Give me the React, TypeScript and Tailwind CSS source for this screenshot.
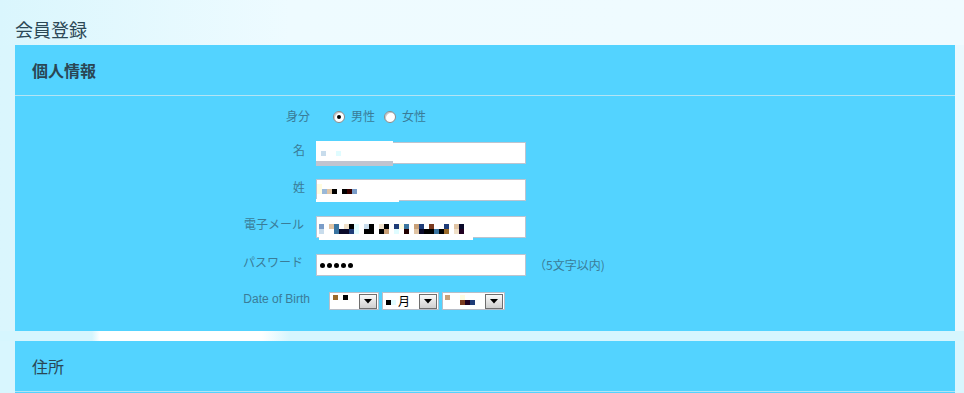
import React from "react";

const JP = "font-['Noto_Sans_CJK_JP','Noto_Sans',sans-serif]";

type Px = [number, number, string, number?, number?];

function Mosaic({ pixels, w, h }: { pixels: Px[]; w: number; h: number }) {
  return (
    <svg width={w} height={h} className="absolute left-0 top-0" shapeRendering="crispEdges">
      {pixels.map(([x, y, c, pw, ph], i) => (
        <rect key={i} x={x} y={y} width={pw ?? 5} height={ph ?? 5} fill={c} />
      ))}
    </svg>
  );
}

function Radio({ checked }: { checked?: boolean }) {
  return (
    <div className="flex h-[12px] w-[12px] items-center justify-center rounded-full border border-[#8a8a8a] bg-white shadow-[inset_1px_1px_0_#c8c8c8]">
      {checked && <div className="h-[4px] w-[4px] rounded-full bg-black" />}
    </div>
  );
}

function TextBox({ children }: { children?: React.ReactNode }) {
  return (
    <div className="relative h-[22px] w-[210px] border border-[#bcc4d0] bg-white">{children}</div>
  );
}

function SelectBox({ w, pixels, text }: { w: number; pixels: Px[]; text?: string }) {
  return (
    <div
      className="relative flex h-[18px] items-center border border-[#b8bec8] bg-white"
      style={{ width: w }}
    >
      <Mosaic pixels={pixels} w={w} h={18} />
      {text && (
        <span className={`absolute top-[0px] text-[12px] leading-[16px] text-black ${JP}`} style={{ left: 15 }}>
          {text}
        </span>
      )}
      <div className="ml-auto mr-[1px] flex h-[15px] w-[18px] items-center justify-center border border-[#6e6e6e] bg-gradient-to-b from-[#fafafa] to-[#cfcfcf]">
        <svg width="8" height="5" viewBox="0 0 8 5">
          <path d="M0 0h8L4 4.5z" fill="#000" />
        </svg>
      </div>
    </div>
  );
}

const labelCls = `text-right text-[12px] leading-[16px] text-[#3a7c98] ${JP}`;

const mailPx: Px[] = [
  [2, 7, "#7a9cc8"], [12, 7, "#e0c4a4"], [17, 7, "#3a74a0"], [27, 7, "#f0e0c8"], [32, 7, "#000"],
  [37, 7, "#e0fcff"], [47, 7, "#c8dcec"], [52, 7, "#000"], [62, 7, "#f0e0c8"], [67, 7, "#000"],
  [77, 7, "#1e3c78"], [82, 7, "#fffce0"], [87, 7, "#3a74a0"], [97, 7, "#c8a078"], [102, 7, "#1e3c78"],
  [112, 7, "#7a3a1e"], [127, 7, "#1e3c78"], [137, 7, "#e0c4a4"], [142, 7, "#0a0a2a"],
  [2, 12, "#c8dcec"], [17, 12, "#3a74a0"], [22, 12, "#0a0a2a", 10], [32, 12, "#1e3c78"], [37, 12, "#e0fcff"],
  [47, 12, "#000", 10], [62, 12, "#000"], [67, 12, "#c8a078"], [77, 12, "#e0fcff"], [87, 12, "#200000"],
  [97, 12, "#e0c4a4"], [102, 12, "#0a0a2a"], [107, 12, "#000", 10], [117, 12, "#3a74a0"], [122, 12, "#000"],
  [127, 12, "#9a6a2a"], [137, 12, "#f0e0c8"], [142, 12, "#200020"],
];

export default function App() {
  return (
    <div className="flex h-[393px] w-full flex-col overflow-hidden bg-[#dcf7fe]">
      {/* title */}
      <div className="h-[45px] shrink-0 bg-gradient-to-r from-[#daf6fd] via-[#eefbff] via-30% to-[#f0fbff] pl-[15px] pt-[17px]">
        <h1 className={`text-[18px] font-normal leading-[24px] text-[#2c4856] ${JP}`}>会員登録</h1>
      </div>

      {/* panel 1 */}
      <div className="shrink-0 bg-gradient-to-r from-[#daf6fd] to-[#eaf9fe] pl-[15px]">
        <div className="w-[940px] bg-[#53d3ff]">
          <div className="flex h-[51px] items-center border-b border-[#b4e4f4] pl-[17px]">
            <h2 className={`text-[16px] font-bold leading-[20px] text-[#2a4654] ${JP}`}>個人情報</h2>
          </div>
          <div className="flex h-[235px] flex-col pt-[12px]">
            {/* 身分 */}
            <div className="flex h-[16px] items-start">
              <div className={`w-[296px] pr-[1px] ${labelCls}`}>身分</div>
              <div className="ml-[22px] flex items-start">
                <div className="mt-[3px] flex"><Radio checked /></div>
                <div className={`ml-[6px] ${labelCls}`}>男性</div>
                <div className="ml-[9px] mt-[3px] flex"><Radio /></div>
                <div className={`ml-[6px] ${labelCls}`}>女性</div>
              </div>
            </div>

            {/* 名 */}
            <div className="mt-[18px] flex h-[22px] items-start">
              <div className={`w-[296px] pr-[6px] ${labelCls}`}>名</div>
              <div className="ml-[5px]">
                <TextBox>
                  <div className="absolute left-[-1px] top-[-2px] h-[20px] w-[77px] bg-white" />
                  <div className="absolute left-[-1px] top-[18px] h-[5px] w-[77px] bg-[#c0c4d0]" />
                  <Mosaic pixels={[[4, 8, "#c8dcec"], [19, 8, "#e0fcff"]]} w={210} h={22} />
                </TextBox>
              </div>
            </div>

            {/* 姓 */}
            <div className="mt-[15px] flex h-[22px] items-start">
              <div className={`w-[296px] pr-[6px] ${labelCls}`}>姓</div>
              <div className="ml-[5px]">
                <TextBox>
                  <div className="absolute left-[-1px] top-[19px] h-[3px] w-[83px] bg-white" />
                  <Mosaic
                    pixels={[
                      [0, 4, "#fffce0", 5, 10],
                      [5, 9, "#9ab8d8"], [10, 9, "#e0c4a4"], [15, 9, "#000"],
                      [25, 9, "#000"], [30, 9, "#3a0000"], [35, 9, "#7a9cc8"],
                    ]}
                    w={210}
                    h={22}
                  />
                </TextBox>
              </div>
            </div>

            {/* 電子メール */}
            <div className="mt-[15px] flex h-[22px] items-start">
              <div className={`w-[296px] pr-[7px] ${labelCls}`}>電子メール</div>
              <div className="ml-[5px]">
                <TextBox>
                  <div className="absolute left-[2px] top-[20px] h-[3px] w-[154px] bg-white" />
                  <Mosaic pixels={mailPx} w={210} h={22} />
                </TextBox>
              </div>
            </div>

            {/* パスワード */}
            <div className="mt-[16px] flex h-[22px] items-start">
              <div className={`w-[296px] pr-[8px] ${labelCls}`}>パスワード</div>
              <div className="ml-[5px] flex items-start">
                <TextBox>
                  <div className="flex h-full items-center gap-[2px] pl-[3px]">
                    <span className="h-[5px] w-[5px] rounded-full bg-black" />
                    <span className="h-[5px] w-[5px] rounded-full bg-black" />
                    <span className="h-[5px] w-[5px] rounded-full bg-black" />
                    <span className="h-[5px] w-[5px] rounded-full bg-black" />
                    <span className="h-[5px] w-[5px] rounded-full bg-black" />
                  </div>
                </TextBox>
                <div className={`ml-[8px] mt-[3px] ${labelCls}`}>（5文字以内)</div>
              </div>
            </div>

            {/* Date of Birth */}
            <div className="mt-[16px] flex h-[18px] items-start">
              <div className="w-[296px] pr-[1px] text-right font-['Liberation_Sans',Arial,sans-serif] text-[12px] leading-[14px] text-[#3a7c98]">
                Date of Birth
              </div>
              <div className="ml-[18px] flex gap-[3px]">
                <SelectBox w={50} pixels={[[3, 2, "#9a6a2a"], [13, 2, "#000"]]} />
                <SelectBox w={57} pixels={[[3, 7, "#000"], [8, 7, "#e0fcff"]]} text="月" />
                <SelectBox
                  w={63}
                  pixels={[
                    [2, 2, "#c8a078"], [17, 2, "#fffce0"],
                    [17, 7, "#7a3a1e"], [22, 7, "#200020"], [27, 7, "#1e3c78"],
                  ]}
                />
              </div>
            </div>
          </div>
        </div>
      </div>

      {/* gap */}
      <div className="h-[10px] shrink-0 bg-[linear-gradient(to_right,#d6f6fe_0px,#d6f6fe_92px,#ffffff_100px,#ffffff_262px,#d6f6fe_290px,#d6f6fe_100%)]" />

      {/* panel 2 */}
      <div className="flex-1 bg-[#d8f6fe] pl-[15px]">
        <div className="h-full w-[940px] bg-[#53d3ff]">
          <div className="flex h-[51px] items-center border-b border-[#b4e4f4] pl-[17px]">
            <h2 className={`text-[16px] font-normal leading-[20px] text-[#2a4654] ${JP}`}>住所</h2>
          </div>
        </div>
      </div>
    </div>
  );
}
